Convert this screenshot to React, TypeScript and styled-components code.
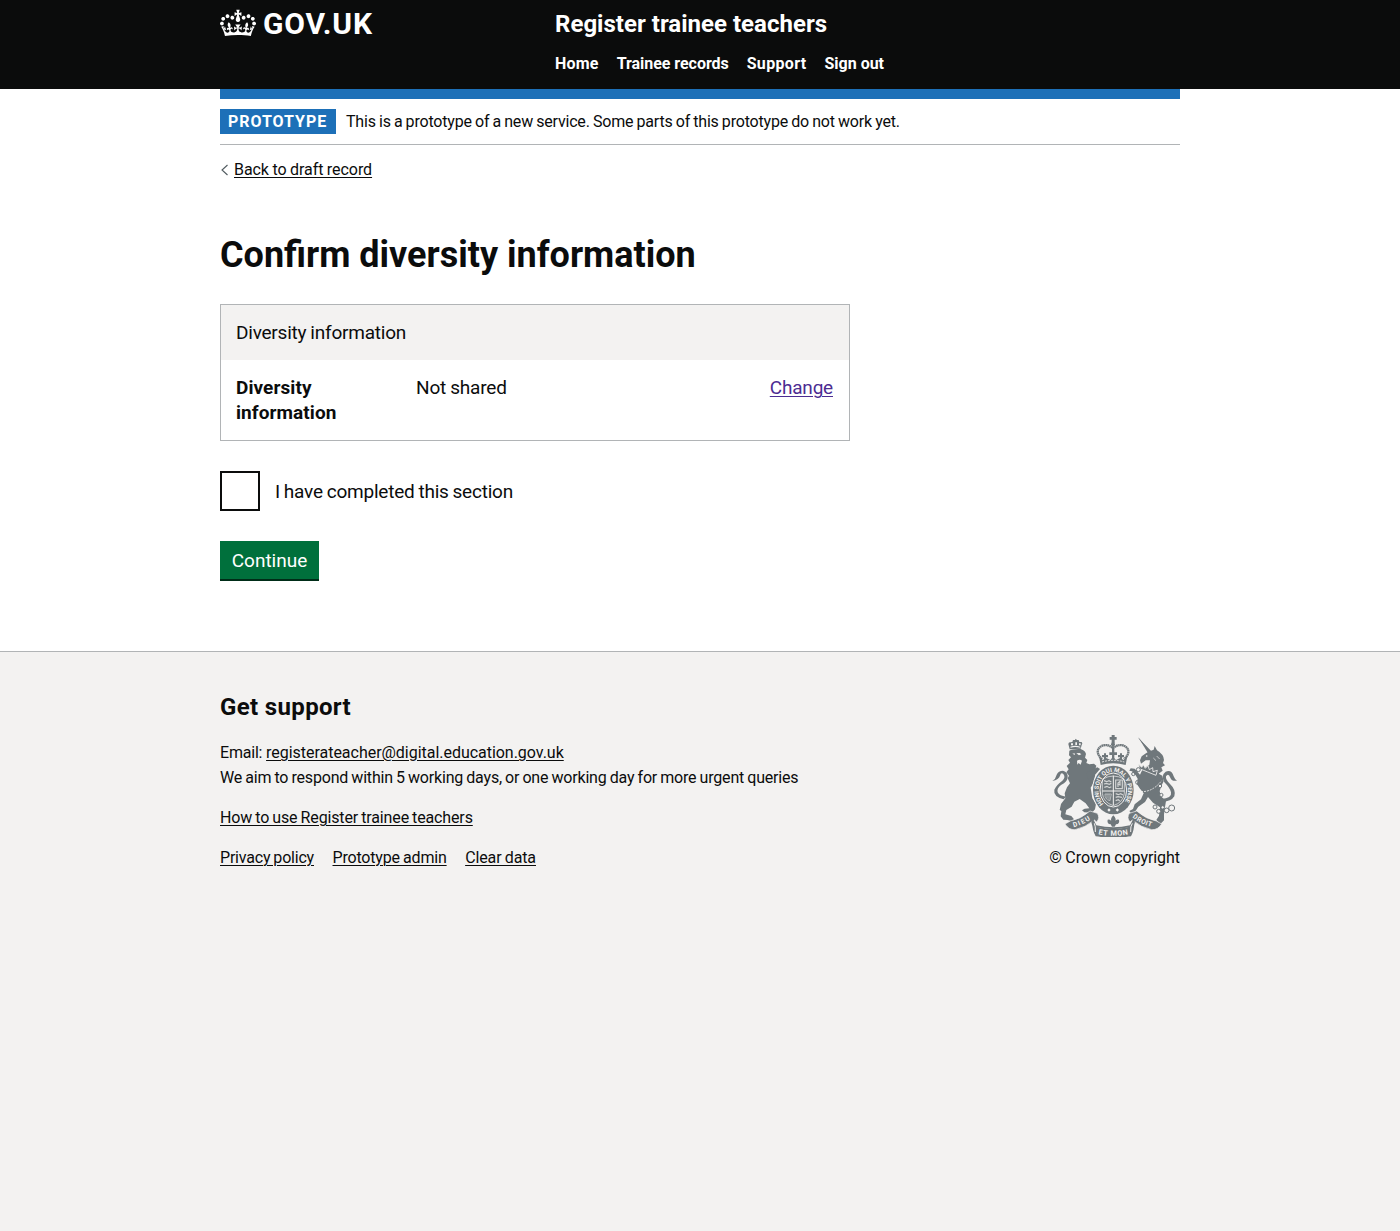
import React from "react";
import styled, { createGlobalStyle } from "styled-components";

const ink = "#0b0c0c";
const border = "#b1b4b6";
const canvas = "#f3f2f1";
const blue = "#1d70b8";
const stack = `Roboto, "Liberation Sans", sans-serif`;

const GlobalStyle = createGlobalStyle`
  html { background: ${canvas}; }
  body { margin: 0; background: #fff; color: ${ink}; font-family: ${stack}; }
  *, *::before, *::after { box-sizing: border-box; }
  h1, h2, p, dl, dd, dt, ul { margin: 0; padding: 0; }
`;

const Container = styled.div`
  width: 960px;
  margin: 0 auto;
`;

/* Per-string tracking, in px */
const T = styled.span<{ $ls?: number; $ws?: number }>`
  letter-spacing: ${(p) => p.$ls ?? 0}px;
  word-spacing: ${(p) => p.$ws ?? 0}px;
`;

const Header = styled.header`
  height: 89px;
  background: ${ink};
  color: #fff;
`;

const HeaderInner = styled(Container)`
  display: grid;
  grid-template-columns: 335px 1fr;
  padding-top: 8px;
`;

const Logo = styled.a`
  display: flex;
  align-items: flex-start;
  height: 32px;
  color: #fff;
  font-size: 30px;
  line-height: 32px;
  font-weight: 700;
  text-decoration: none;
`;

const Crown = styled.svg`
  width: 36px;
  height: 32px;
  margin: -1px 7px 0 0;
  fill: currentColor;
`;

const ServiceName = styled.a`
  display: block;
  color: #fff;
  font-size: 24px;
  line-height: 32px;
  font-weight: 700;
  text-decoration: none;
`;

const Nav = styled.ul`
  display: flex;
  gap: 18px;
  margin-top: 14px;
  list-style: none;
  font-size: 16px;
  line-height: 20px;
  font-weight: 700;
`;

const NavLink = styled.a`
  color: #fff;
  text-decoration: none;
`;

const BlueBar = styled.div`
  height: 10px;
  background: ${blue};
`;

const PhaseBanner = styled.div`
  display: flex;
  align-items: center;
  height: 46px;
  border-bottom: 1px solid ${border};
  font-size: 16px;
  line-height: 20px;
`;

const PhaseTag = styled.strong`
  height: 25px;
  width: 116px;
  margin-right: 10px;
  padding-left: 8px;
  background: ${blue};
  color: #fff;
  line-height: 25px;
  white-space: nowrap;
`;

const BackLink = styled.a`
  display: flex;
  align-items: center;
  gap: 5px;
  margin-top: 15px;
  font-size: 16px;
  line-height: 20px;
  color: ${ink};
  text-decoration: none;
  span { text-decoration: underline; text-underline-offset: 2px; text-decoration-thickness: 1px; }
  svg { width: 9px; height: 12px; }
`;

const Main = styled.main`
  width: 630px;
  padding: 55px 0 72px;
`;

const Heading = styled.h1`
  font-size: 36px;
  line-height: 40px;
  font-weight: 700;
`;

const Card = styled.section`
  margin-top: 29px;
  border: 1px solid ${border};
  font-size: 19px;
  line-height: 25px;
`;

const CardTitle = styled.div`
  height: 55px;
  padding: 15px;
  background: ${canvas};
`;

const SummaryRow = styled.dl`
  display: grid;
  grid-template-columns: 180px 1fr auto;
  padding: 15px 16px 15px 15px;
  dt { width: 130px; font-weight: 700; }
`;

const ChangeLink = styled.a`
  color: #4c2c92;
  text-decoration: underline;
  text-decoration-thickness: 1px;
  text-underline-offset: 2px;
`;

const CheckRow = styled.label`
  display: flex;
  align-items: center;
  gap: 15px;
  margin-top: 30px;
  font-size: 19px;
  line-height: 25px;
`;

const Checkbox = styled.input`
  appearance: none;
  width: 40px;
  height: 40px;
  margin: 0;
  border: 2px solid ${ink};
  background: #fff;
`;

const Button = styled.button`
  display: block;
  width: 99px;
  height: 38px;
  margin: 30px 0 0;
  padding: 0;
  border: 0;
  background: #00703c;
  box-shadow: 0 2px 0 #002d18;
  color: #fff;
  font: 400 19px/19px ${stack};
`;

const Footer = styled.footer`
  height: 580px;
  border-top: 1px solid ${border};
  background: ${canvas};
  font-size: 16px;
`;

const FooterInner = styled(Container)`
  display: flex;
  justify-content: space-between;
  align-items: flex-end;
  height: 218px;
`;

const FooterMeta = styled.div`
  display: flex;
  flex-direction: column;
  gap: 15px;
  line-height: 25px;
`;

const FooterHeading = styled.h2`
  margin-bottom: 3px;
  font-size: 24px;
  line-height: 30px;
`;

const FooterLink = styled.a`
  color: ${ink};
  text-decoration: underline;
  text-decoration-thickness: 1px;
  text-underline-offset: 2px;
`;

const InlineLinks = styled.div`
  display: flex;
  gap: 18.5px;
`;

const Copyright = styled.div`
  display: flex;
  flex-direction: column;
  align-items: flex-end;
  gap: 8px;
  line-height: 25px;
  svg { width: 125px; height: 102px; margin-right: 3px; }
`;

const RoyalArms = () => (
  <svg viewBox="21 15 375 306" fill="#6f777b" stroke="none" aria-hidden="true">
    <defs>
      <path id="garter" d="M176 222 A44 55 0 1 1 234 222" />
      <path id="dieu" d="M86 292 Q117 284 146 262" />
      <path id="etmon" d="M160 313 Q206 322 252 313" />
      <path id="droit" d="M262 262 Q289 284 326 292" />
    </defs>

    {/* lion */}
    <path d="M74 58 L70 42 Q71 35 77 37 L82 36 L84 30 L90 30 L92 26 L96 30 L101 30 L103 36 L110 36 Q114 40 110 45 L107 56 Z" />
    <path d="M73 62 Q82 56 107 57 Q121 62 123 72 L120 83 L127 90 L124 99 L133 103 L147 101 L154 107 L151 118 L142 126 L151 133 L146 158 L137 173 L142 205 L153 222 L150 238 L141 248 L118 247 L111 241 L119 236 L133 235 L122 220 L104 207 L88 215 L80 230 L64 240 L61 253 L79 258 L87 268 L80 273 L67 270 L55 269 L47 259 L49 243 L44 240 L48 222 L61 205 L59 190 L66 172 L75 160 L68 145 L72 137 L64 127 L71 118 L65 108 L75 98 L70 90 L78 82 L72 76 Z" />
    <path d="M56 208 Q24 199 28 179 Q34 165 52 152 Q63 142 55 132 Q48 126 45 137 Q42 149 22 153 Q32 147 35 134 Q40 122 54 122 Q70 127 68 143 Q66 156 48 165 Q35 175 38 187 Q44 198 63 200 Z" />
    <path d="M123 128 L157 112 L165 117 L153 131 L130 148 Z" />
    <g fill="#f3f2f1">
      <path d="M94 70 L104 69 L109 73 L102 76 Z M82 71 L89 70 L90 75 Z M96 92 Q105 87 111 92 L107 104 L101 99 L97 104 Z" />
      <path d="M78 40h6v6h-6z M91 37h5v8h-5z M102 40h5v6h-5z" />
      <path d="M76 50 Q91 45 106 50 L106 53 Q91 49 77 53 Z" />
    </g>

    {/* unicorn */}
    <path d="M278 22 L318 62 L326 59 L329 48 L336 61 Q356 73 357 90 L354 99 L360 106 L349 112 L353 122 L341 131 L352 137 L356 154 L350 166 L344 183 L347 198 L363 213 L360 231 L357 253 L357 271 L346 282 L334 270 L342 257 L345 232 L324 218 L309 201 L300 216 L280 230 L271 244 L260 252 L253 243 L264 237 L269 223 L288 208 L296 190 L285 176 L276 163 L278 146 L272 136 L261 124 L253 122 L257 115 L269 116 L285 134 L292 119 L313 104 L315 91 L302 91 L288 101 L285 91 L290 79 L304 69 L311 65 Z" />
    <path d="M348 207 Q382 205 378 187 Q374 172 358 157 Q347 136 362 125 Q380 118 386 139 Q389 148 396 152 Q381 155 376 143 Q370 128 363 139 Q361 149 375 162 Q394 180 388 199 Q378 216 349 215 Z" />
    <path d="M280 22 L317 66 L310 71 Z" />
    <path d="M281 103 L290 112 L295 104 L301 115 L309 107 L313 119 L323 113 L324 125 L337 121 L333 136 Q306 125 283 116 Z" stroke="#f3f2f1" strokeWidth="2.5" />
    <circle cx="305" cy="78" r="2.5" fill="#f3f2f1" />
    <path d="M325 84 L333 92 M335 78 L344 87" fill="none" stroke="#f3f2f1" strokeWidth="2" />
    <path d="M279 183 Q318 192 350 152" fill="none" stroke="#f3f2f1" strokeWidth="2.5" strokeDasharray="6 3" />
    <g fill="none" stroke="#6f777b" strokeWidth="3">
      <circle cx="280" cy="119" r="6" /><circle cx="265" cy="132" r="5" /><circle cx="278" cy="157" r="6" />
      <circle cx="345" cy="168" r="5" fill="#f3f2f1" /><circle cx="349" cy="195" r="5" fill="#f3f2f1" />
      <circle cx="330" cy="231" r="6" fill="#f3f2f1" /><circle cx="341" cy="244" r="6" fill="#f3f2f1" />
      <circle cx="353" cy="232" r="5" fill="#f3f2f1" /><circle cx="365" cy="241" r="7" fill="#f3f2f1" /><circle cx="380" cy="234" r="9" fill="#f3f2f1" />
    </g>

    {/* imperial crown */}
    <path d="M200 15h9v6h6v8h-6v10h-9V29h-6v-8h6z" />
    <circle cx="204" cy="43" r="6" />
    <path d="M171 88 Q149 66 165 51 Q183 38 204 54 Q226 38 243 51 Q260 66 237 88" fill="none" stroke="#6f777b" strokeWidth="7" strokeDasharray="5 1" />
    <path d="M201 49h7v42h-7z M193 67h23v8h-23z M177 70h6v18h-6z M171 75h18v7h-18z M225 70h6v18h-6z M219 75h18v7h-18z" />
    <path d="M162 78 L173 90 L184 84 L196 90 L204 80 L213 90 L225 84 L236 90 L247 78 L242 105 Q204 94 167 105 Z" />
    <path d="M171 96 Q204 86 238 96" fill="none" stroke="#f3f2f1" strokeWidth="2.5" strokeDasharray="6 3" />

    {/* garter and shield */}
    <ellipse cx="205" cy="180" rx="64" ry="76" fill="#f3f2f1" />
    <ellipse cx="205" cy="180" rx="61" ry="73" />
    <ellipse cx="205" cy="180" rx="40" ry="51" fill="none" stroke="#f3f2f1" strokeWidth="3" />
    <text fill="#f3f2f1" fontFamily='Roboto, "Liberation Sans", sans-serif' fontWeight="700" fontSize="18">
      <textPath href="#garter" textLength="236">HONI SOIT QUI MAL Y PENSE</textPath>
    </text>
    <path d="M172 148 Q205 128 238 148 V190 Q235 217 205 227 Q175 217 172 190 Z" fill="none" stroke="#f3f2f1" strokeWidth="2" />
    <path d="M205 137V226 M172 183H238" stroke="#f3f2f1" strokeWidth="3" />
    <g fill="none" stroke="#d2d4d4" strokeWidth="3.5">
      <path d="M177 152 l8 3 7 -3 7 4 M177 162 l7 -2 9 3 6 -3 M178 172 l8 -3 7 4 6 -3" />
      <path d="M212 191 l8 3 7 -3 7 4 M212 202 l7 -2 12 2 M212 212 l8 -3 4 4" />
      <path d="M212 150 h20 v26 h-20 z M219 171 v-12 l6 -5 v13 M217 163h10" />
      <path d="M180 192 q-1 17 15 20 l4 -20 z M186 192v14 M192 192v17" strokeWidth="2" />
    </g>
    <path d="M187 240 l5 -5 5 5 -5 5z M212 240 l5 -5 5 5 -5 5z" fill="#f3f2f1" />

    {/* scrolls */}
    <path d="M60 282 L76 273 Q108 267 135 243 L157 250 Q166 263 155 276 L148 270 Q121 293 90 299 Q71 300 60 282 Z" stroke="#f3f2f1" strokeWidth="2" />
    <path d="M350 282 L334 273 Q302 267 275 243 L253 250 Q244 263 255 276 L262 270 Q289 293 320 299 Q339 300 350 282 Z" stroke="#f3f2f1" strokeWidth="2" />
    <path d="M144 266 Q134 277 145 289 Q206 306 263 289 Q275 277 265 266 L255 286 Q206 298 154 286 Z" />
    <path d="M141 274 L155 290 Q206 302 254 290 L268 274 Q268 302 258 319 Q206 327 152 319 Q142 302 141 274 Z" />
    <path d="M148 280 Q152 288 151 306 M262 280 Q256 288 257 306" fill="none" stroke="#f3f2f1" strokeWidth="3" />
    <g fill="#f3f2f1" fontFamily='Roboto, "Liberation Sans", sans-serif' fontWeight="700">
      <text fontSize="20"><textPath href="#dieu" textLength="56">DIEU</textPath></text>
      <text fontSize="22"><textPath href="#etmon" textLength="90">ET MON</textPath></text>
      <text fontSize="20"><textPath href="#droit" textLength="64">DROIT</textPath></text>
    </g>

    {/* fleur-de-lis */}
    <path d="M205 256 Q218 268 208 280 Q213 265 222 269 Q225 281 213 283 L209 290 H201 L197 283 Q185 281 188 269 Q197 265 202 280 Q192 268 205 256 Z" />
  </svg>
);

export default function App() {
  return (
    <>
      <GlobalStyle />
      <Header>
        <HeaderInner>
          <Logo>
            <Crown viewBox="0 0 132 97" aria-hidden="true">
              <path
                fillRule="evenodd"
                d="M25 30.2c3.5 1.5 7.7-.2 9.1-3.7 1.5-3.6-.2-7.8-3.9-9.2-3.6-1.4-7.6.3-9.1 3.9-1.4 3.5.3 7.5 3.9 9zM9 39.5c3.6 1.5 7.8-.2 9.2-3.7 1.5-3.6-.2-7.8-3.9-9.1-3.6-1.5-7.6.2-9.1 3.8-1.4 3.5.3 7.5 3.8 9zM4.4 57.2c3.5 1.5 7.7-.2 9.1-3.8 1.5-3.6-.2-7.7-3.9-9.1-3.5-1.5-7.6.3-9.1 3.8-1.4 3.5.3 7.6 3.9 9.1zm38.3-21.4c3.5 1.5 7.7-.2 9.1-3.8 1.5-3.6-.2-7.7-3.9-9.1-3.6-1.5-7.6.3-9.1 3.8-1.3 3.6.4 7.7 3.9 9.1zm64.4-5.6c-3.6 1.5-7.8-.2-9.1-3.7-1.5-3.6.2-7.8 3.8-9.2 3.6-1.4 7.7.3 9.2 3.9 1.3 3.5-.4 7.5-3.9 9zm15.9 9.3c-3.6 1.5-7.7-.2-9.1-3.7-1.5-3.6.2-7.8 3.7-9.1 3.6-1.5 7.7.2 9.2 3.8 1.5 3.5-.3 7.5-3.8 9zm4.7 17.7c-3.6 1.5-7.8-.2-9.2-3.8-1.5-3.6.2-7.7 3.9-9.1 3.6-1.5 7.7.3 9.2 3.8 1.3 3.5-.4 7.6-3.9 9.1zM89.3 35.8c-3.6 1.5-7.8-.2-9.2-3.8-1.4-3.6.2-7.7 3.9-9.1 3.6-1.5 7.7.3 9.2 3.8 1.4 3.6-.3 7.7-3.9 9.1zM69.7 17.7l8.9 4.7V9.3l-8.9 2.8c-.2-.3-.5-.6-.9-.9L72.4 0H59.6l3.5 11.2c-.3.3-.6.5-.9.9l-8.8-2.8v13.1l8.8-4.7c.3.3.6.7.9.9l-5 15.4v.1c-.2.8-.4 1.6-.4 2.4 0 4.1 3.1 7.5 7 8.1h.2c.3 0 .7.1 1 .1.4 0 .7 0 1-.1h.2c4-.6 7.1-4.1 7.1-8.1 0-.8-.1-1.7-.4-2.4V34l-5.1-15.4c.4-.2.7-.6 1-.9zM66 92.8c16.9 0 32.8 1.1 47.1 3.2 4-16.9 8.9-26.7 14-33.5l-9.6-3.4c1 4.9 1.1 7.2 0 10.2-1.5-1.4-3-4.3-4.2-8.7L108.6 76c2.8-2 5-3.2 7.5-3.3-4.4 9.4-10 11.9-13.6 11.2-4.3-.8-6.3-4.6-5.6-7.9 1-4.7 5.7-5.9 8-.5 4.3-8.7-3-11.4-7.6-8.8 7.1-7.2 7.9-13.5 2.1-21.1-8 6.1-8.1 12.3-4.5 20.8-4.7-5.4-12.1-2.5-9.5 6.2 3.4-5.2 7.9-2 7.2 3.1-.6 4.3-6.4 7.8-13.5 7.2-10.3-.9-10.9-8-11.2-13.8 2.5-.5 7.1 1.8 11 7.3L80.2 60c-4.1 4.4-8 5.3-12.3 5.4 1.4-4.4 8-11.6 8-11.6H55.5s6.4 7.2 7.9 11.6c-4.2-.1-8-1-12.3-5.4l1.4 16.4c3.9-5.5 8.5-7.7 10.9-7.3-.3 5.8-.9 12.8-11.1 13.8-7.2.6-12.9-2.9-13.5-7.2-.7-5 3.8-8.3 7.1-3.1 2.7-8.7-4.6-11.6-9.4-6.2 3.7-8.5 3.6-14.7-4.6-20.8-5.8 7.6-5 13.9 2.2 21.1-4.7-2.6-11.9.1-7.7 8.8 2.3-5.5 7.1-4.2 8.1.5.7 3.3-1.3 7.1-5.7 7.9-3.5.7-9-1.8-13.5-11.2 2.5.1 4.7 1.3 7.5 3.3l-4.7-15.4c-1.2 4.4-2.7 7.2-4.3 8.7-1.1-3-.9-5.3 0-10.2l-9.5 3.4c5 6.9 9.9 16.7 14 33.5 14.8-2.1 30.8-3.2 47.7-3.2z"
              />
            </Crown>
            <T $ls={0.85}>GOV.UK</T>
          </Logo>
          <div>
            <ServiceName><T $ls={0.02}>Register trainee teachers</T></ServiceName>
            <Nav>
              <li><NavLink><T $ls={0.2}>Home</T></NavLink></li>
              <li><NavLink><T $ls={-0.04}>Trainee records</T></NavLink></li>
              <li><NavLink><T $ls={0.32}>Support</T></NavLink></li>
              <li><NavLink><T>Sign out</T></NavLink></li>
            </Nav>
          </div>
        </HeaderInner>
      </Header>

      <Container>
        <BlueBar />
        <PhaseBanner>
          <PhaseTag><T $ls={0.95}>PROTOTYPE</T></PhaseTag>
          <T $ws={-0.6} $ls={-0.185}>This is a prototype of a new service. Some parts of this prototype do not work yet.</T>
        </PhaseBanner>
        <BackLink>
          <svg viewBox="0 0 9 12" fill="none" stroke="#505a5f" strokeWidth="1.1"><path d="M7.5 1 L2 6 L7.5 11" /></svg>
          <T $ws={-0.4} $ls={-0.06}>Back to draft record</T>
        </BackLink>

        <Main>
          <Heading>Confirm diversity information</Heading>
          <Card>
            <CardTitle><T $ls={-0.22} $ws={-0.5}>Diversity information</T></CardTitle>
            <SummaryRow>
              <dt><T $ls={0.08}>Diversity information</T></dt>
              <dd><T $ls={-0.17} $ws={-0.5}>Not shared</T></dd>
              <dd><ChangeLink><T $ls={-0.2}>Change</T></ChangeLink></dd>
            </SummaryRow>
          </Card>
          <CheckRow>
            <Checkbox type="checkbox" />
            <T $ls={-0.22} $ws={-0.6}>I have completed this section</T>
          </CheckRow>
          <Button>Continue</Button>
        </Main>
      </Container>

      <Footer>
        <FooterInner>
          <FooterMeta>
            <FooterHeading><T $ls={0.35}>Get support</T></FooterHeading>
            <p>
              <T $ls={-0.2}>Email: </T><FooterLink><T $ls={-0.03}>registerateacher@digital.education.gov.uk</T></FooterLink>
              <br />
              <T $ls={-0.18} $ws={-0.65}>We aim to respond within 5 working days, or one working day for more urgent queries</T>
            </p>
            <p><FooterLink><T $ls={-0.14} $ws={-0.7}>How to use Register trainee teachers</T></FooterLink></p>
            <InlineLinks>
              <FooterLink><T $ls={-0.2} $ws={-0.7}>Privacy policy</T></FooterLink>
              <FooterLink><T $ls={-0.18} $ws={-0.6}>Prototype admin</T></FooterLink>
              <FooterLink><T $ls={-0.1} $ws={-0.7}>Clear data</T></FooterLink>
            </InlineLinks>
          </FooterMeta>
          <Copyright>
            <RoyalArms />
            <T $ws={-0.5} $ls={-0.05}>© Crown copyright</T>
          </Copyright>
        </FooterInner>
      </Footer>
    </>
  );
}
